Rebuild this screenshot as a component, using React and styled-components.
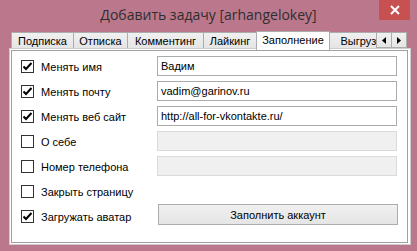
import React from "react";
import styled, { createGlobalStyle } from "styled-components";

const GlobalStyle = createGlobalStyle`
  html, body {
    margin: 0;
    padding: 0;
    background: #bb788d;
  }
  * {
    box-sizing: border-box;
  }
`;

const Window = styled.div`
  width: 417px;
  height: 251px;
  background: #bb788d;
  padding: 0 6px 6px 9px;
  display: flex;
  flex-direction: column;
  font-family: "Liberation Sans", Arial, sans-serif;
  font-size: 11px;
  color: #000;
`;

const TitleBar = styled.div`
  height: 31px;
  margin-left: -9px;
  margin-right: -6px;
  display: grid;
  grid-template-columns: 1fr auto 1fr;
  align-items: start;
`;

const Title = styled.div`
  grid-column: 2;
  padding-top: 5px;
  font-family: "Open Sans", "Noto Sans", sans-serif;
  font-size: 14px;
  line-height: 20px;
  color: #2e2e2e;
  white-space: nowrap;
`;

const CloseButton = styled.div`
  grid-column: 3;
  justify-self: end;
  margin-right: 7px;
  width: 31px;
  height: 20px;
  background: #c75050;
  display: flex;
  align-items: center;
  justify-content: center;
`;

const TabHeader = styled.div`
  height: 17px;
  display: flex;
  align-items: flex-end;
  padding-left: 2px;
`;

const TabViewport = styled.div`
  width: 365px;
  height: 19px;
  display: flex;
  align-items: flex-end;
  overflow: hidden;
  margin-bottom: -2px;
  padding-bottom: 2px;
  position: relative;
  z-index: 1;
`;

const Tab = styled.div`
  flex: none;
  width: ${(p) => p.w}px;
  height: ${(p) => (p.active ? 19 : 16)}px;
  margin-left: -1px;
  margin-bottom: ${(p) => (p.active ? -2 : 0)}px;
  border: 1px solid #acacac;
  border-bottom: none;
  background: ${(p) =>
    p.active ? "#fff" : "linear-gradient(#f0f0f0, #e5e5e5)"};
  position: relative;
  z-index: ${(p) => (p.active ? 2 : 1)};
  display: flex;
  align-items: ${(p) => (p.active ? "flex-start" : "center")};
  padding-top: ${(p) => (p.active ? 2 : 0)}px;
  justify-content: center;
  white-space: nowrap;
  &:first-child {
    margin-left: 0;
  }
`;

const ScrollButtons = styled.div`
  display: flex;
  align-self: flex-end;
  margin-left: 0;
`;

const ScrollButton = styled.div`
  width: 16px;
  height: 16px;
  margin-left: ${(p) => (p.second ? -1 : 0)}px;
  border: 1px solid #acacac;
  background: linear-gradient(#f0f0f0, #e5e5e5);
  display: flex;
  align-items: center;
  justify-content: center;
`;

const Panel = styled.div`
  width: 402px;
  height: 197px;
  border: 1px solid #cdcdcd;
  padding: 1px 2px 1px 1px;
  background: #fff;
`;

const Page = styled.div`
  height: 100%;
  border: 1px solid #a0a0a0;
  padding: 3px 10px 0 9px;
  display: grid;
  grid-template-columns: 136px 1fr;
  grid-auto-rows: 25px;
`;

const CheckCell = styled.label`
  display: flex;
  align-items: center;
  gap: 7px;
  white-space: nowrap;
`;

const Box = styled.span`
  width: 13px;
  height: 13px;
  border: 1px solid #333;
  background: #fff;
  display: flex;
  align-items: center;
  justify-content: center;
`;

const Field = styled.div`
  align-self: center;
  height: 20px;
  margin-top: -1px;
  border: 1px solid ${(p) => (p.disabled ? "#dadada" : "#ababab")};
  background: ${(p) => (p.disabled ? "#f0f0f0" : "#fff")};
  padding-left: 3px;
  display: flex;
  align-items: center;
  white-space: nowrap;
  overflow: hidden;
`;

const ActionButton = styled.div`
  align-self: start;
  height: 21px;
  margin-left: 1px;
  margin-right: -1px;
  border: 1px solid #acacac;
  background: linear-gradient(#f0f0f0, #e5e5e5);
  display: flex;
  align-items: center;
  justify-content: center;
`;

const Check = () => (
  <svg width="9" height="9" viewBox="0 0 9 9">
    <path d="M0.5 4.5 L3 7 L8.5 1" fill="none" stroke="#000" strokeWidth="2" />
  </svg>
);

const CheckBox = ({ checked, children }) => (
  <CheckCell>
    <Box>{checked && <Check />}</Box>
    {children}
  </CheckCell>
);

const tabs = [
  { label: "Подписка", w: 63 },
  { label: "Отписка", w: 55 },
  { label: "Комментинг", w: 77 },
  { label: "Лайкинг", w: 54 },
  { label: "Заполнение", w: 74, active: true },
  { label: "Выгрузка", w: 70 },
];

export default function App() {
  return (
    <>
      <GlobalStyle />
      <Window>
        <TitleBar>
          <Title>Добавить задачу [arhangelokey]</Title>
          <CloseButton>
            <svg width="10" height="10" viewBox="0 0 10 10">
              <path d="M1 1 L9 9 M9 1 L1 9" stroke="#fff" strokeWidth="2" />
            </svg>
          </CloseButton>
        </TitleBar>
        <TabHeader>
          <TabViewport>
            {tabs.map((t) => (
              <Tab key={t.label} w={t.w} active={t.active}>
                {t.label}
              </Tab>
            ))}
          </TabViewport>
          <ScrollButtons>
            <ScrollButton>
              <svg width="4" height="7" viewBox="0 0 4 7">
                <polygon points="4,0 4,7 0,3.5" fill="#000" />
              </svg>
            </ScrollButton>
            <ScrollButton second>
              <svg width="4" height="7" viewBox="0 0 4 7">
                <polygon points="0,0 0,7 4,3.5" fill="#000" />
              </svg>
            </ScrollButton>
          </ScrollButtons>
        </TabHeader>
        <Panel>
          <Page>
            <CheckBox checked>Менять имя</CheckBox>
            <Field>Вадим</Field>
            <CheckBox checked>Менять почту</CheckBox>
            <Field>vadim@garinov.ru</Field>
            <CheckBox checked>Менять веб сайт</CheckBox>
            <Field>http://all-for-vkontakte.ru/</Field>
            <CheckBox>О себе</CheckBox>
            <Field disabled />
            <CheckBox>Номер телефона</CheckBox>
            <Field disabled />
            <CheckBox>Закрыть страницу</CheckBox>
            <span />
            <CheckBox checked>Загружать аватар</CheckBox>
            <ActionButton>Заполнить аккаунт</ActionButton>
          </Page>
        </Panel>
      </Window>
    </>
  );
}
